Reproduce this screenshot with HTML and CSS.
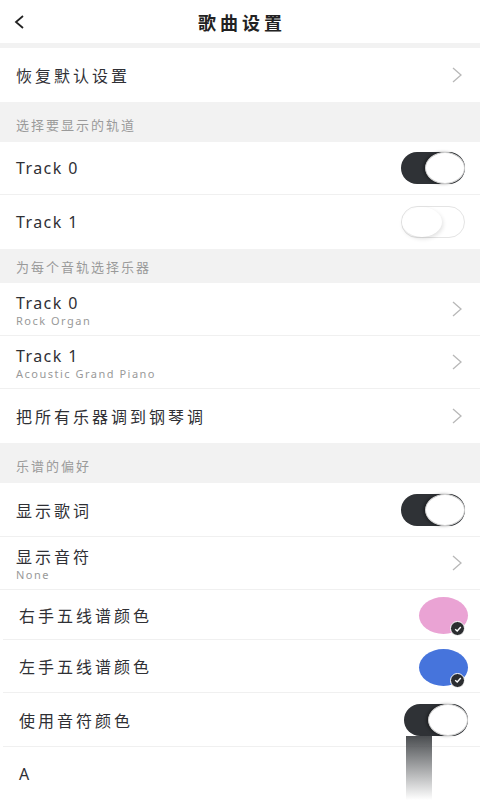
FILE: index.html
```html
<!DOCTYPE html>
<html lang="zh-CN">

<head>
    <meta charset="UTF-8">
    <meta name="viewport" content="width=device-width, initial-scale=1.0">
    <title>歌曲设置</title>
    <link rel="stylesheet" href="styles.css">
</head>

<body>
    <div class="topbar">
        <svg class="back" width="14" height="16" viewBox="0 0 14 16">
            <polyline points="10,2 3,8 10,14" fill="none" stroke="#222" stroke-width="1.8" />
        </svg>
        <div class="title">歌曲设置</div>
    </div>
    <div class="gap"></div>

    <div class="row tall">
        <div class="label">恢复默认设置</div>
        <svg class="chev" width="12" height="16" viewBox="0 0 12 16">
            <polyline points="2,1 10,8 2,15" fill="none" stroke="#b8b8b8" stroke-width="1.3" />
        </svg>
    </div>

    <div class="section big">选择要显示的轨道</div>
    <div class="row line">
        <div class="label latin">Track 0</div>
        <div class="toggle on"><span class="knob"></span></div>
    </div>
    <div class="row tall">
        <div class="label latin">Track 1</div>
        <div class="toggle"><span class="knob"></span></div>
    </div>

    <div class="section">为每个音轨选择乐器</div>
    <div class="row line">
        <div class="text-block">
            <div class="label latin">Track 0</div>
            <div class="sub">Rock Organ</div>
        </div>
        <svg class="chev" width="12" height="16" viewBox="0 0 12 16">
            <polyline points="2,1 10,8 2,15" fill="none" stroke="#b8b8b8" stroke-width="1.3" />
        </svg>
    </div>
    <div class="row line">
        <div class="text-block">
            <div class="label latin">Track 1</div>
            <div class="sub">Acoustic Grand Piano</div>
        </div>
        <svg class="chev" width="12" height="16" viewBox="0 0 12 16">
            <polyline points="2,1 10,8 2,15" fill="none" stroke="#b8b8b8" stroke-width="1.3" />
        </svg>
    </div>
    <div class="row tall">
        <div class="label">把所有乐器调到钢琴调</div>
        <svg class="chev" width="12" height="16" viewBox="0 0 12 16">
            <polyline points="2,1 10,8 2,15" fill="none" stroke="#b8b8b8" stroke-width="1.3" />
        </svg>
    </div>

    <div class="section big">乐谱的偏好</div>
    <div class="row line tall">
        <div class="label">显示歌词</div>
        <div class="toggle on"><span class="knob"></span></div>
    </div>
    <div class="row line">
        <div class="text-block">
            <div class="label">显示音符</div>
            <div class="sub">None</div>
        </div>
        <svg class="chev" width="12" height="16" viewBox="0 0 12 16">
            <polyline points="2,1 10,8 2,15" fill="none" stroke="#b8b8b8" stroke-width="1.3" />
        </svg>
    </div>
    <div class="row line inset short">
        <div class="label">右手五线谱颜色</div>
        <div class="swatch pink">
            <span class="check">
                <svg width="8" height="8" viewBox="0 0 8 8">
                    <polyline points="1.2,4.2 3.2,6 6.8,2" fill="none" stroke="#fff" stroke-width="1.4" />
                </svg>
            </span>
        </div>
    </div>
    <div class="row line inset">
        <div class="label">左手五线谱颜色</div>
        <div class="swatch blue">
            <span class="check">
                <svg width="8" height="8" viewBox="0 0 8 8">
                    <polyline points="1.2,4.2 3.2,6 6.8,2" fill="none" stroke="#fff" stroke-width="1.4" />
                </svg>
            </span>
        </div>
    </div>
    <div class="row line inset tall">
        <div class="label">使用音符颜色</div>
        <div class="toggle on">
            <span class="knob"></span>
            <span class="smear"></span>
        </div>
    </div>
    <div class="row inset">
        <div class="label latin">A</div>
    </div>
</body>

</html>
```

FILE: styles.css
```css
body {
    margin: 0;
    width: 480px;
    height: 800px;
    overflow: hidden;
    background: #fff;
    font-family: "Noto Sans", "Noto Sans CJK SC", sans-serif;
    color: #2f3035;
}

.topbar {
    height: 43px;
    display: flex;
    align-items: center;
    justify-content: center;
    position: relative;
}

.back {
    position: absolute;
    left: 13px;
    top: 14px;
}

.title {
    font-size: 18px;
    font-weight: 600;
    letter-spacing: 4px;
    color: #222;
    margin-left: 4px;
}

.gap {
    height: 5px;
    background: #f2f2f2;
}

.section {
    height: 34px;
    background: #f2f2f2;
    display: flex;
    align-items: center;
    padding-left: 16px;
    font-size: 13px;
    letter-spacing: 2px;
    color: #9a9a9a;
}

.section.big {
    height: 40px;
    padding-top: 4px;
    box-sizing: border-box;
}

.row {
    height: 53px;
    display: flex;
    align-items: center;
    justify-content: space-between;
    padding: 0 15px 0 16px;
    box-sizing: border-box;
    position: relative;
}

.row.line {
    border-bottom: 1px solid #f0f0f0;
}

.row.tall {
    height: 54px;
}

.row.short {
    height: 50px;
}

.row.inset {
    margin-left: 3px;
    padding-left: 16px;
    padding-right: 12px;
}

.label {
    font-size: 16px;
    letter-spacing: 3px;
}

.label.latin {
    letter-spacing: 1.4px;
}

.text-block {
    display: flex;
    flex-direction: column;
    padding-top: 2px;
}

.text-block .label {
    line-height: 20px;
}

.sub {
    font-size: 11px;
    letter-spacing: 1.5px;
    color: #999;
    line-height: 15px;
}

.chev {
    margin-right: 2px;
}

.toggle {
    width: 64px;
    height: 32px;
    border-radius: 16px;
    background: #fff;
    border: 1px solid #e4e4e4;
    box-sizing: border-box;
    position: relative;
}

.toggle .knob {
    position: absolute;
    left: 0;
    top: 0;
    width: 40px;
    height: 30px;
    border-radius: 50%;
    background: #fff;
    box-shadow: 1px 2px 4px rgba(0, 0, 0, 0.12);
}

.toggle.on {
    background: #2f3236;
    border: none;
}

.toggle.on .knob {
    left: 24px;
    top: 0;
    width: 40px;
    height: 32px;
    border: 1px solid #d0d0d0;
    box-sizing: border-box;
    box-shadow: -2px 0 3px rgba(0, 0, 0, 0.35);
}

/* rendering smear under the last switch */
.smear {
    position: absolute;
    left: 2px;
    top: 32px;
    width: 26px;
    height: 64px;
    background: linear-gradient(#4a4d50, rgba(255, 255, 255, 0));
}

.swatch {
    width: 49px;
    height: 37px;
    border-radius: 50%;
    position: relative;
    margin-top: 2px;
}

.swatch.pink {
    background: #eaa3d4;
}

.swatch.blue {
    background: #4674dc;
}

.check {
    position: absolute;
    right: 3px;
    bottom: -2px;
    width: 13px;
    height: 13px;
    border-radius: 50%;
    background: #2b2d30;
    border: 1px solid #fff;
    display: flex;
    align-items: center;
    justify-content: center;
}
```
